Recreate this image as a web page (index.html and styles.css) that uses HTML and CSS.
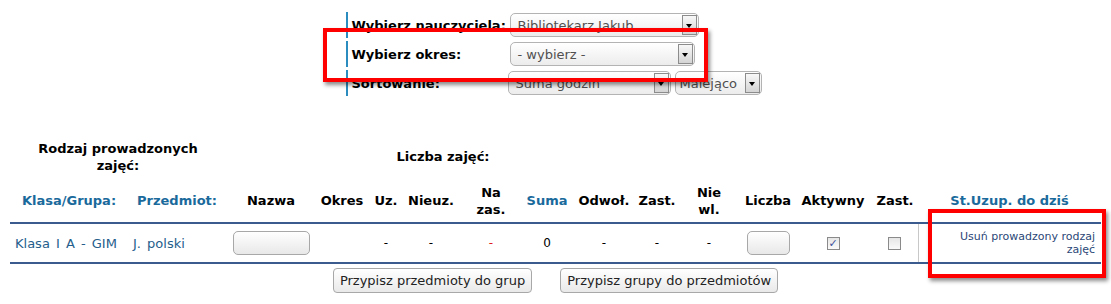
FILE: index.html
```html
<!DOCTYPE html>
<html lang="pl">
<head>
  <meta charset="UTF-8" />
  <title>Prowadzone zajęcia</title>
  <link rel="stylesheet" href="styles.css">
</head>
<body>

  <!-- Filtry -->
  <div class="filtry">
    <div class="wiersz">
      <div class="etykieta">Wybierz nauczyciela:</div>
      <div class="wybor szeroki"><span>Bibliotekarz Jakub</span><i class="strzalka"></i></div>
    </div>
    <div class="wiersz">
      <div class="etykieta">Wybierz okres:</div>
      <div class="wybor sredni"><span>- wybierz -</span><i class="strzalka"></i></div>
    </div>
    <div class="wiersz">
      <div class="etykieta">Sortowanie:</div>
      <div class="wybor suma"><span>Suma godzin</span><i class="strzalka"></i></div>
      <div class="wybor kierunek"><span>Malejąco</span><i class="strzalka"></i></div>
    </div>
  </div>

  <!-- Tabela zajęć -->
  <div class="obszar">
    <table class="zajecia">
      <colgroup>
        <col style="width:118px"><col style="width:98px"><col style="width:90px"><col style="width:52px">
        <col style="width:36px"><col style="width:54px"><col style="width:66px"><col style="width:46px">
        <col style="width:68px"><col style="width:38px"><col style="width:66px"><col style="width:52px">
        <col style="width:78px"><col style="width:46px"><col style="width:183px">
      </colgroup>
      <tr class="grupy">
        <th colspan="2">Rodzaj prowadzonych<br>zajęć:</th>
        <th></th>
        <th colspan="5">Liczba zajęć:</th>
        <th colspan="7"></th>
      </tr>
      <tr class="naglowki">
        <th class="nieb">Klasa/Grupa:</th>
        <th class="nieb">Przedmiot:</th>
        <th>Nazwa</th>
        <th>Okres</th>
        <th>Uz.</th>
        <th>Nieuz.</th>
        <th>Na<br>zas.</th>
        <th class="nieb">Suma</th>
        <th>Odwoł.</th>
        <th>Zast.</th>
        <th>Nie<br>wl.</th>
        <th>Liczba</th>
        <th>Aktywny</th>
        <th>Zast.</th>
        <th class="nieb">St.Uzup. do dziś</th>
      </tr>
      <tr class="dane">
        <td class="tekst">Klasa I A - GIM</td>
        <td class="tekst">J. polski</td>
        <td><span class="pole szerokie"></span></td>
        <td></td>
        <td>-</td>
        <td>-</td>
        <td class="czerwony">-</td>
        <td>0</td>
        <td>-</td>
        <td>-</td>
        <td>-</td>
        <td><span class="pole waskie"></span></td>
        <td><span class="kratka zaznaczona">&#10003;</span></td>
        <td><span class="kratka"></span></td>
        <td class="usun"><a href="#">Usuń prowadzony rodzaj<br>zajęć</a></td>
      </tr>
    </table>

    <div class="przyciski">
      <button>Przypisz przedmioty do grup</button>
      <button>Przypisz grupy do przedmiotów</button>
    </div>
  </div>

  <!-- Zaznaczenia -->
  <div class="ramka ramka-okres"></div>
  <div class="ramka ramka-usun"></div>

</body>
</html>
```

FILE: styles.css
```css
body {
  font-family: 'DejaVu Sans', Verdana, sans-serif;
  font-size: 13px;
  color: #000;
  background-color: #fff;
  margin: 0;
  padding: 0;
}

.filtry {
  width: 420px;
  margin: 0 auto;
  padding-top: 12px;
  display: flex;
  flex-direction: column;
  gap: 3px;
}

.wiersz {
  display: flex;
  align-items: center;
  height: 26px;
  border-left: 2px solid #2b8cbf;
}

.etykieta {
  width: 158px;
  padding-left: 4px;
  font-weight: bold;
}

.wybor {
  height: 24px;
  box-sizing: border-box;
  border: 1px solid #b3b3b3;
  border-radius: 5px;
  background: linear-gradient(#ffffff, #ececec);
  display: flex;
  align-items: center;
  justify-content: space-between;
  padding-left: 7px;
  padding-right: 1px;
  color: #505050;
  margin-right: 4px;
}

.wybor.szeroki { width: 189px; }
.wybor.sredni { width: 185px; }
.wybor.suma { width: 165px; }
.wybor.kierunek { width: 88px; padding-left: 4px; }

.strzalka {
  width: 15px;
  height: 20px;
  box-sizing: border-box;
  border: 1px solid #8c8c8c;
  background: linear-gradient(#f8f8f8, #d4d4d4);
  position: relative;
}

.strzalka::after {
  content: "";
  position: absolute;
  left: 3px;
  top: 8px;
  border-left: 3px solid transparent;
  border-right: 3px solid transparent;
  border-top: 4px solid #000;
}

.obszar {
  padding: 0 10px;
  margin-top: 40px;
}

.zajecia {
  width: 1091px;
  table-layout: fixed;
  border-collapse: collapse;
}

.zajecia th {
  font-weight: bold;
  text-align: center;
  padding: 0;
  line-height: 17px;
}

.grupy th {
  height: 41px;
  vertical-align: middle;
}

.naglowki th {
  height: 43px;
  padding-top: 2px;
  vertical-align: middle;
  border-bottom: 2px solid #3b5a8e;
}

.nieb {
  color: #1a6a9c;
}

.dane td {
  height: 38px;
  text-align: center;
  font-size: 12px;
  border-bottom: 2px solid #3b5a8e;
  padding: 0;
}

.dane td.tekst {
  text-align: left;
  padding-left: 5px;
  font-size: 13px;
  color: #255e8c;
  word-spacing: 2px;
}

.dane td.czerwony {
  color: #e02020;
}

.pole {
  display: inline-block;
  height: 22px;
  border: 1px solid #a8a8a8;
  border-radius: 5px;
  background: linear-gradient(#ffffff, #e8e8e8);
  vertical-align: middle;
}

.pole.szerokie { width: 75px; }
.pole.waskie { width: 41px; }

.kratka {
  display: inline-block;
  width: 11px;
  height: 11px;
  border: 1px solid #8a8a8a;
  background: linear-gradient(#e6e6e6, #fafafa);
  vertical-align: middle;
  font-size: 11px;
  line-height: 11px;
  color: #3c4f9a;
  font-weight: bold;
}

.dane td.usun {
  border-left: 1px solid #c8c8c8;
  text-align: right;
  padding-right: 6px;
  font-size: 11px;
  line-height: 13px;
}

.usun a {
  color: #2b4777;
  text-decoration: none;
}

.przyciski {
  display: flex;
  justify-content: center;
  gap: 28px;
  margin-top: 4px;
}

.przyciski button {
  font-family: 'DejaVu Sans', Verdana, sans-serif;
  font-size: 13px;
  color: #222;
  height: 25px;
  padding: 0 6px;
  border: 1px solid #a8a8a8;
  border-radius: 4px;
  background: linear-gradient(#ffffff, #e9e9e9);
}

.ramka {
  position: absolute;
  border: 4px solid #ff0000;
  box-shadow: 2px 3px 4px rgba(0, 0, 0, 0.45);
}

.ramka-okres {
  left: 323px;
  top: 28px;
  width: 377px;
  height: 46px;
}

.ramka-usun {
  left: 928px;
  top: 209px;
  width: 170px;
  height: 61px;
}
```
